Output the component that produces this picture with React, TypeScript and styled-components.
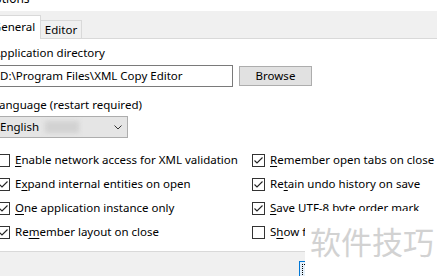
import React from "react";
import styled, { createGlobalStyle } from "styled-components";

const GlobalStyle = createGlobalStyle`
  html, body { margin: 0; padding: 0; background: #ffffff; }
  body { font-family: "Noto Sans", "Segoe UI", sans-serif; font-size: 11.5px; color: #000; }
  * { box-sizing: border-box; }
`;

const Window = styled.div`
  position: relative;
  width: 437px;
  height: 276px;
  overflow: hidden;
  background: #f0f0f0;
`;

const TitleBar = styled.div`
  height: 11px;
  background: #ffffff;
  overflow: hidden;
`;

const TitleText = styled.div`
  font-size: 12px;
  line-height: 16px;
  margin-top: -9px;
  margin-left: -15px;
  color: #000;
`;

const Body = styled.div`
  margin-left: -14px;
  width: 470px;
`;

const TabStrip = styled.div`
  height: 27px;
  display: flex;
  align-items: flex-end;
  padding-left: 1px;
  position: relative;
  z-index: 1;
`;

const Tab = styled.div<{ $active?: boolean; $w: number }>`
  width: ${(p) => p.$w}px;
  height: ${(p) => (p.$active ? 24 : 18)}px;
  margin-bottom: ${(p) => (p.$active ? -1 : 0)}px;
  background: ${(p) => (p.$active ? "#ffffff" : "#f0f0f0")};
  border: 1px solid #d9d9d9;
  border-bottom: none;
  ${(p) => (p.$active ? "" : "border-left: none;")}
  text-align: center;
  line-height: 16px;
  padding-top: ${(p) => (p.$active ? 3 : 1)}px;
`;

const Panel = styled.div`
  height: 214px;
  background: #ffffff;
  border-top: 1px solid #d9d9d9;
  border-bottom: 1px solid #d9d9d9;
  padding: 6px 0 0 7px;
`;

const Label = styled.div`
  line-height: 16px;
  height: 16px;
`;

const Row = styled.div<{ $mt: number }>`
  display: flex;
  align-items: center;
  margin-top: ${(p) => p.$mt}px;
`;

const TextInput = styled.div`
  width: 240px;
  height: 22px;
  border: 1px solid #7a7a7a;
  background: #fff;
  padding-left: 6px;
  line-height: 20px;
  white-space: nowrap;
`;

const Button = styled.div`
  margin-left: 6px;
  width: 73px;
  height: 20px;
  border: 1px solid #adadad;
  background: #e1e1e1;
  text-align: center;
  line-height: 18px;
`;

const Select = styled.div`
  width: 135px;
  height: 22px;
  border: 1px solid #adadad;
  background: #e5e5e5;
  display: flex;
  align-items: center;
  padding-left: 6px;
  padding-right: 5px;
  line-height: 20px;
`;

const Blur = styled.span`
  display: inline-block;
  width: 34px;
  height: 12px;
  margin-left: 6px;
  background: #d2d2d2;
  filter: blur(2px);
`;

const Chevron = styled.svg`
  margin-left: auto;
`;

const Grid = styled.div`
  margin-top: 10px;
  margin-left: 4px;
  display: grid;
  grid-template-columns: 255px 1fr;
  grid-auto-rows: 24px;
`;

const CheckRow = styled.div`
  display: flex;
  align-items: center;
  white-space: nowrap;
  line-height: 16px;
`;

const Box = styled.span`
  width: 13px;
  height: 13px;
  border: 1px solid #333333;
  background: #ffffff;
  flex: none;
  display: flex;
  align-items: center;
  justify-content: center;
`;

const CheckLabel = styled.span`
  margin-left: 5px;
`;

const Accel = styled.span`
  text-decoration: underline;
  text-underline-offset: 2px;
`;

const Footer = styled.div`
  height: 24px;
  display: flex;
  padding-left: 299px;
  padding-top: 9px;
`;

const FocusButton = styled.div`
  width: 75px;
  height: 23px;
  border: 1px solid #0078d7;
  background: #e5f1fb;
  padding: 2px;
  flex: none;
`;

const FocusRing = styled.div`
  width: 100%;
  height: 100%;
  border: 1px dotted #000;
`;

const Watermark = styled.div`
  position: absolute;
  left: 305px;
  top: 211px;
  right: 0;
  bottom: 0;
  background: #ffffff;
  padding: 14px 0 0 5px;
  font-family: "Noto Sans CJK SC", sans-serif;
  font-size: 31px;
  line-height: 31px;
  color: #d2d2d2;
  white-space: nowrap;
`;

type Item = { pre: string; acc: string; post: string; checked: boolean };

const items: Item[] = [
  { pre: "", acc: "E", post: "nable network access for XML validation", checked: false },
  { pre: "", acc: "R", post: "emember open tabs on close", checked: true },
  { pre: "E", acc: "x", post: "pand internal entities on open", checked: true },
  { pre: "Re", acc: "t", post: "ain undo history on save", checked: true },
  { pre: "", acc: "O", post: "ne application instance only", checked: true },
  { pre: "", acc: "S", post: "ave UTF-8 byte order mark", checked: true },
  { pre: "Re", acc: "m", post: "ember layout on close", checked: true },
  { pre: "S", acc: "h", post: "ow full path in document tab", checked: false },
];

const Check = ({ item }: { item: Item }) => (
  <CheckRow>
    <Box>
      {item.checked && (
        <svg width="11" height="11" viewBox="0 0 11 11">
          <polyline points="1.5,5.5 4,8 9.5,2.5" fill="none" stroke="#222" strokeWidth="1.1" />
        </svg>
      )}
    </Box>
    <CheckLabel>
      {item.pre}
      <Accel>{item.acc}</Accel>
      {item.post}
    </CheckLabel>
  </CheckRow>
);

export default function App() {
  return (
    <>
      <GlobalStyle />
      <Window>
        <TitleBar>
          <TitleText>Options</TitleText>
        </TitleBar>
        <Body>
          <TabStrip>
            <Tab $active $w={54}>General</Tab>
            <Tab $w={41}>Editor</Tab>
          </TabStrip>
          <Panel>
            <Label>Application directory</Label>
            <Row $mt={4}>
              <TextInput>D:\Program Files\XML Copy Editor</TextInput>
              <Button>Browse</Button>
            </Row>
            <Row $mt={10}>
              <Label>Language (restart required)</Label>
            </Row>
            <Row $mt={3}>
              <Select>
                English
                <Blur />
                <Chevron width="8" height="5" viewBox="0 0 8 5">
                  <polyline points="0.5,0.5 4,4 7.5,0.5" fill="none" stroke="#333" strokeWidth="1" />
                </Chevron>
              </Select>
            </Row>
            <Grid>
              {items.map((it, i) => (
                <Check key={i} item={it} />
              ))}
            </Grid>
          </Panel>
        </Body>
        <Footer>
          <FocusButton>
            <FocusRing />
          </FocusButton>
        </Footer>
        <Watermark>软件技巧</Watermark>
      </Window>
    </>
  );
}
